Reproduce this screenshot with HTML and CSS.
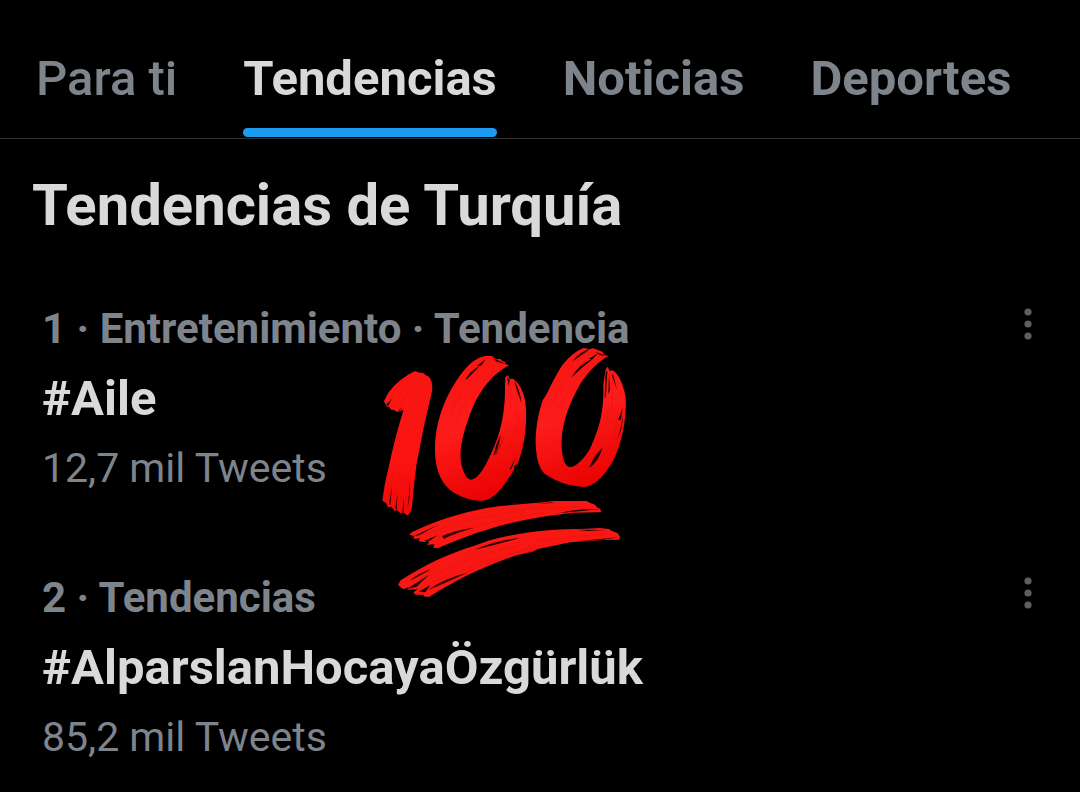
FILE: index.html
```html
<!DOCTYPE html>
<html lang="es">
<head>
<meta charset="utf-8">
<meta name="viewport" content="width=device-width, initial-scale=1">
<title>Tendencias</title>
<link rel="stylesheet" href="styles.css">
</head>
<body>
<nav class="tabs" aria-label="Secciones">
  <a class="tab tab-light" href="#para-ti">Para ti</a>
  <a class="tab tab-active" href="#tendencias" aria-current="page">Tendencias</a>
  <a class="tab" href="#noticias">Noticias</a>
  <a class="tab" href="#deportes">Deportes</a>
</nav>
<main class="feed">
  <h1 class="heading">Tendencias de Turquía</h1>
  <ol class="trends">
    <li class="trend">
      <div class="trend-text">
        <p class="meta">1 · Entretenimiento · Tendencia</p>
        <h2 class="title">#Aile</h2>
        <p class="count">12,7 mil Tweets</p>
      </div>
      <button class="more" type="button" aria-label="Más opciones">
        <svg class="more-icon" viewBox="0 0 8 32" aria-hidden="true"><circle cx="4" cy="4" r="3.6"/><circle cx="4" cy="16" r="3.6"/><circle cx="4" cy="28" r="3.6"/></svg>
      </button>
      <svg class="sticker" viewBox="0 0 810 810" role="img" aria-label="Cien puntos">
        <defs>
          <linearGradient id="ink" x1="0" y1="0" x2="0" y2="1">
            <stop offset="0" stop-color="#f91613"/><stop offset=".6" stop-color="#fa1412"/><stop offset="1" stop-color="#f20a08"/>
          </linearGradient>
          <linearGradient id="glow" x1=".2" y1="0" x2=".45" y2="1">
            <stop offset="0" stop-color="#f71411"/><stop offset=".5" stop-color="#fc1c1a"/><stop offset="1" stop-color="#ea0303"/>
          </linearGradient>
        </defs>
        <path fill="url(#ink)" d="M42 183L55 158Q86 116 135 93L148 98L158 98L168 106L177 110Q190 128 186 154Q160 260 140 370Q132 430 126 500Q122 524 110 526L101 518L91 520L82 511L73 512L64 500L54 502L48 489L37 482Q43 430 55 386Q75 290 101 209Q89 216 80 215L72 210L64 209L57 201L49 199Z"/>
        <path fill="url(#glow)" d="M417 76L407 72L406 66L397 63L391 56L380 58L365 48L345 48Q314 54 286 86C232 150 194 240 195 330C195 375 206 420 240 450C275 475 310 484 340 482C379 476 407 430 433 388L432 378L443 371C461 325 470 270 468 215C468 170 454 133 429 116L420 117L413 105L406 112L405 140C406 235 386 300 347 374C330 405 314 419 302 419C289 417 280 398 274 373C265 326 283 266 307 205C333 143 373 99 417 76Z"/>
        <path fill="url(#glow)" d="M715 49L701 43L698 36L684 30L670 25L656 28L641 23Q606 38 577 75C559 102 545 131 528 166L518 181C505 220 496 267 497 315C500 350 502 375 522 400C557 426 603 440 642 441C687 434 709 393 728 365C757 308 770 235 767 175C763 142 747 100 727 91L720 93L712 80L706 92L700 133C702 213 690 259 663 320C643 358 615 382 600 381C581 379 574 340 575 300C577 245 600 185 632 130C655 95 686 63 715 49Z"/>
        <path fill="#f71814" d="M118 585L125 577C205 538 290 512 390 498L520 487L548 483L650 483L663 490L675 494L681 502L690 506L694 515L688 517L610 518L550 526C429 542 336 568 205 624L190 623L193 612L171 615L178 605L157 606L145 602L150 595L130 597L133 588Z"/>
        <path fill="#f71814" d="M84 735L92 721C168 672 235 641 320 615L355 602C450 576 535 567 650 566L690 564L716 567L728 574L742 579L750 590L748 599L700 600L600 607L504 627L488 635L440 646C350 676 270 713 178 770L164 770L160 764L136 764L130 757L144 748L112 749L116 742L100 748Z"/>
        <g class="streaks">
          <path d="M48 194L66 176L54 198Z"/><path d="M86 212L98 201L88 214Z"/><path d="M112 505Q117 475 120 420Q121 480 112 505Z"/><path d="M57 493L66 440L61 494Z"/><path d="M76 508L83 455L80 508Z"/><path d="M97 518L102 470L101 518Z"/>
          <path d="M286 119Q301 91 329 78Q309 100 291 117Z"/><path d="M320 78L347 58L333 77Z"/><path d="M366 53L410 73L381 65Z"/><path d="M432 121Q452 154 454 188Q441 156 432 121Z"/><path d="M411 112L417 139L419 118Z"/><path d="M371 346Q378 309 392 286Q388 318 374 344Z"/><path d="M376 344L407 281L379 342Z"/><path d="M418 389L437 352L424 387Z"/>
          <path d="M607 64Q633 32 660 27Q629 50 607 64Z"/><path d="M603 114Q627 72 671 55Q636 82 603 114Z"/><path d="M656 57L685 39L667 58Z"/><path d="M676 35L711 49L690 45Z"/><path d="M704 174L707 95L712 94L708 168Z"/><path d="M715 162L717 103L720 150Z"/><path d="M728 99L741 149L727 111Z"/><path d="M740 300Q756 263 757 225Q761 266 740 300Z"/><path d="M658 384Q665 355 697 323Q690 358 658 384Z"/><path d="M744 240L758 205L753 239Z"/>
          <path d="M216 589Q251 570 315 563Q260 577 222 596Z"/><path d="M132 588L208 553L147 586Z"/><path d="M163 602L204 585L172 607Z"/><path d="M497 492L553 486L545 489Z"/><path d="M570 519Q615 506 690 507L635 513Z"/><path d="M389 557L440 546L397 560Z"/>
          <path d="M119 723Q145 699 184 688Q151 706 119 723Z"/><path d="M111 747L177 704L140 740Z"/><path d="M174 750Q220 716 292 698Q228 728 174 750Z"/><path d="M146 755L181 735L166 757Z"/><path d="M313 629Q382 600 449 594Q378 614 313 629Z"/><path d="M620 569L706 570L654 573Z"/><path d="M623 603L748 592L700 599Z"/><path d="M456 641L515 625L480 635Z"/>
        </g>
        <g class="bristles">
          <path d="M110 112Q75 145 60 180M130 106Q92 149 75 195M147 113Q113 150 88 207M58 465L72 391M72 480L87 402M89 492L103 399M104 500L113 406M240 230Q270 140 338 80M258 245Q290 165 370 95M422 200L421 140M434 242L439 170M410 340Q437 285 446 232M546 190Q585 105 650 59M560 222Q600 123 682 62M725 220L728 138M711 252L716 190M704 344Q736 290 745 215"/>
          <path d="M170 581Q320 526 470 510M204 591Q360 540 520 519M400 507L640 500M130 733Q280 650 470 611M148 745Q300 670 500 618M180 747Q330 670 520 614M495 604L700 581"/>
        </g>
      </svg>
    </li>
    <li class="trend">
      <div class="trend-text">
        <p class="meta">2 · Tendencias</p>
        <h2 class="title">#AlparslanHocayaÖzgürlük</h2>
        <p class="count">85,2 mil Tweets</p>
      </div>
      <button class="more" type="button" aria-label="Más opciones">
        <svg class="more-icon" viewBox="0 0 8 32" aria-hidden="true"><circle cx="4" cy="4" r="3.6"/><circle cx="4" cy="16" r="3.6"/><circle cx="4" cy="28" r="3.6"/></svg>
      </button>
    </li>
  </ol>
</main>
</body>
</html>
```
FILE: styles.css
```css
* { box-sizing: border-box; }
body {
  margin: 0;
  background: #000;
  color: #d9d9d9;
  font-family: Roboto, "Liberation Sans", sans-serif;
}
.tabs {
  display: flex;
  gap: 66px;
  padding: 20px 36px 0;
  border-bottom: 1px solid #2f3336;
}
.tab {
  display: flex;
  flex-direction: column;
  justify-content: space-between;
  height: 118px;
  padding-top: 31px;
  color: #7e848c;
  font-size: 49px;
  font-weight: 700;
  line-height: 56px;
  text-decoration: none;
  white-space: nowrap;
}
.tab-light { font-weight: 500; }
.tab-active { color: #d9d9d9; }
.tab-active::after {
  content: "";
  height: 9px;
  margin-bottom: 1px;
  border-radius: 5px;
  background: #1d9bf0;
}
.feed { padding: 30px 42px 0; }
.heading {
  margin: 0 -10px;
  font-size: 58px;
  font-weight: 700;
  line-height: 72px;
}
.trends {
  display: grid;
  gap: 74px;
  margin: 0;
  padding: 60px 0 0;
  list-style: none;
}
.trend {
  position: relative;
  display: flex;
  justify-content: space-between;
  align-items: flex-start;
}
.trend-text > * { margin: 0; }
.meta, .count {
  color: #7e848c;
  line-height: 56px;
}
.meta {
  font-size: 42px;
  font-weight: 700;
}
.title {
  padding: 6px 0;
  font-size: 49px;
  font-weight: 700;
  line-height: 71px;
}
.count {
  font-size: 41px;
  font-weight: 400;
}
.more {
  width: 20px;
  padding: 7px 0 0;
  border: 0;
  background: none;
}
.more-icon {
  display: block;
  width: 8px;
  height: 32px;
  margin: 0 auto;
  fill: #5d5e60;
}
.sticker {
  position: absolute;
  top: 39px;
  left: 328px;
  width: 270px;
  height: 270px;
}
.streaks { fill: #240000; }
.bristles {
  fill: none;
  stroke: #d90808;
  stroke-width: 2;
  opacity: .35;
}
```
